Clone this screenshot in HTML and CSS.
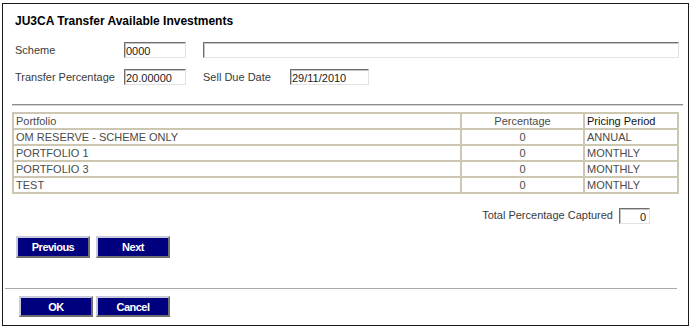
FILE: index.html
```html
<!DOCTYPE html>
<html lang="en">
<head>
  <meta charset="UTF-8" />
  <title>JU3CA Transfer Available Investments</title>
  <link rel="stylesheet" href="styles.css">
</head>
<body>

<div class="window">
  <h1 class="title">JU3CA Transfer Available Investments</h1>

  <div class="form-row">
    <label class="label">Scheme</label>
    <input class="field short" type="text" value="0000">
    <input class="field wide" type="text" value="">
  </div>
  <div class="form-row">
    <label class="label">Transfer Percentage</label>
    <input class="field short" type="text" value="20.00000">
    <label class="label sell">Sell Due Date</label>
    <input class="field date" type="text" value="29/11/2010">
  </div>

  <div class="rule"></div>

  <!-- Portfolio list -->
  <table class="grid">
    <thead>
      <tr>
        <th class="col-name">Portfolio</th>
        <th class="col-pct">Percentage</th>
        <th class="col-period">Pricing Period</th>
      </tr>
    </thead>
    <tbody>
      <tr><td>OM RESERVE - SCHEME ONLY</td><td class="num">0</td><td>ANNUAL</td></tr>
      <tr><td>PORTFOLIO 1</td><td class="num">0</td><td>MONTHLY</td></tr>
      <tr><td>PORTFOLIO 3</td><td class="num">0</td><td>MONTHLY</td></tr>
      <tr><td>TEST</td><td class="num">0</td><td>MONTHLY</td></tr>
    </tbody>
  </table>

  <div class="total-row">
    <span class="total-label">Total Percentage Captured</span>
    <input class="field total" type="text" value="0">
  </div>

  <div class="buttons nav">
    <button class="btn">Previous</button>
    <button class="btn">Next</button>
  </div>

  <div class="rule bottom"></div>

  <div class="buttons actions">
    <button class="btn">OK</button>
    <button class="btn">Cancel</button>
  </div>
</div>

</body>
</html>
```

FILE: styles.css
```css
body {
  margin: 0;
  font-family: 'Liberation Sans', Arial, sans-serif;
  font-size: 11px;
  color: #3a3a3a;
  background: #fff;
}

.window {
  margin: 3px 3px 0 2px;
  height: 323px;
  box-sizing: border-box;
  border: 1px solid #1a1a1a;
}

.title {
  margin: 0;
  padding: 10px 0 0 12px;
  font-size: 12px;
  line-height: 14px;
  font-weight: bold;
  color: #000;
}

.form-row {
  display: flex;
  align-items: flex-start;
  padding-left: 12px;
  margin-top: 14px;
}

.form-row + .form-row {
  margin-top: 11px;
}

.label {
  width: 109px;
  padding-top: 1px;
  line-height: 14px;
}

.label.sell {
  width: 87px;
  margin-left: 17px;
}

.field {
  height: 16px;
  box-sizing: border-box;
  margin: 0;
  padding: 1px 1px 0;
  border: 1px solid;
  border-color: #6f6f6f #e2e2e2 #e2e2e2 #6f6f6f;
  box-shadow: inset 1px 1px 0 #c4c4c4;
  font-family: inherit;
  font-size: 11px;
  color: #222;
  outline: none;
}

.short {
  width: 62px;
}

.wide {
  flex: 1;
  margin-left: 17px;
  margin-right: 9px;
}

.date {
  width: 79px;
}

.rule {
  margin: 19px 5px 0 9px;
  border-top: 1px solid #8e8e8e;
  border-bottom: 1px solid #d6d6d6;
}

.grid {
  margin: 6px 0 0 9px;
  width: 667px;
  border-collapse: collapse;
  border: 2px solid #cdc7b2;
  color: #4a4a4a;
}

.grid th,
.grid td {
  padding: 0 2px;
  height: 14px;
  line-height: 14px;
  border: 2px solid #cdc7b2;
  text-align: left;
  font-weight: normal;
  white-space: nowrap;
}

.col-name {
  width: 442px;
}

.col-pct {
  width: 117px;
}

.grid th.col-pct,
.grid td.num {
  text-align: center;
}

.grid th.col-period {
  color: #111;
}

.total-row {
  display: flex;
  justify-content: flex-end;
  align-items: flex-start;
  margin: 14px 38px 0 0;
}

.total-label {
  margin-right: 6px;
  line-height: 14px;
}

.total {
  width: 31px;
  text-align: right;
  padding-right: 3px;
}

.buttons {
  display: flex;
  gap: 6px;
}

.nav {
  margin: 12px 0 0 13px;
}

.actions {
  margin: 7px 0 0 16px;
  gap: 3px;
}

.btn {
  width: 74px;
  height: 22px;
  box-sizing: border-box;
  margin: 0;
  padding: 0;
  background: #00007e;
  border: 2px solid;
  border-color: #c9c9dc #6e6e6e #6e6e6e #c9c9dc;
  color: #fff;
  font-family: 'Liberation Sans', Arial, sans-serif;
  font-size: 11px;
  font-weight: bold;
  letter-spacing: -0.5px;
  cursor: pointer;
}

.actions .btn {
  height: 21px;
}

.rule.bottom {
  margin: 30px 11px 0 2px;
  border-top: 1px solid #a9a9a9;
  border-bottom: 0;
}
```
